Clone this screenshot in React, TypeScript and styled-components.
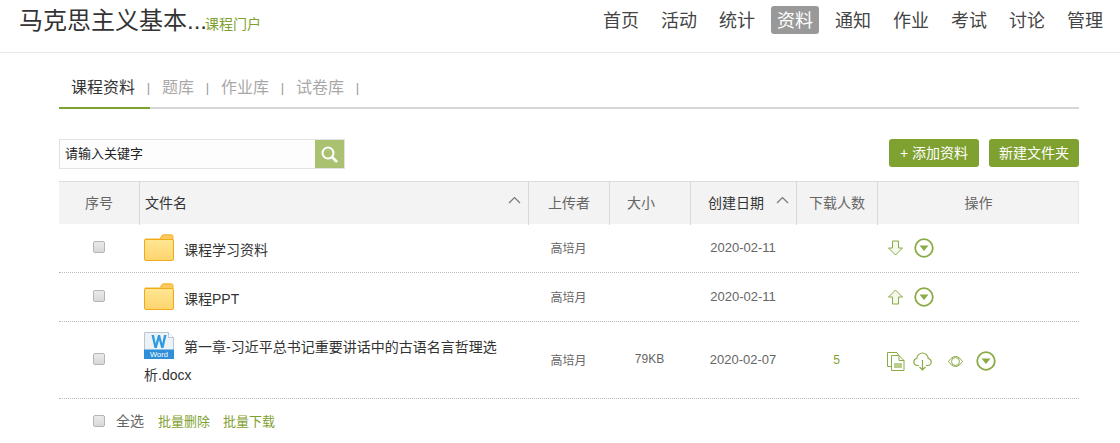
import React from "react";
import styled, { createGlobalStyle } from "styled-components";

const Global = createGlobalStyle`
  html, body { margin: 0; padding: 0; background: #fff; }
  body { font-family: "Liberation Sans", "Noto Sans CJK SC", sans-serif; color: #333; overflow: hidden; }
  * { box-sizing: border-box; }
`;
const green = "#7fa130";
const iconGreen = "#8aab45";

const Header = styled.header`
  height: 53px; border-bottom: 1px solid #e8e8e8; display: flex; justify-content: space-between;
  padding: 0 11px 0 19px;
`;
const Brand = styled.div`display: flex; align-items: center; height: 34px; margin-top: 4px;`;
const Title = styled.span`font-size: 24px; line-height: 34px; color: #333;`;
const Sub = styled.span`font-size: 14px; color: ${green}; margin: 4px 0 0 -2px;`;
const Nav = styled.nav`display: flex; gap: 10px; padding-top: 6px; align-items: flex-start;`;
const NavItem = styled.a<{ $on?: boolean }>`
  width: 48px; height: 28px; border-radius: 3px; text-align: center;
  font-size: 18px; line-height: 30px;
  color: ${p => (p.$on ? "#fff" : "#444")}; background: ${p => (p.$on ? "#999" : "transparent")};
`;
const Main = styled.main`padding: 0 41px 0 59px;`;
const Tabs = styled.div`
  margin-top: 20px; height: 36px; border-bottom: 2px solid #d6d6d6; display: flex; align-items: flex-start;
`;
const Tab = styled.a`
  font-size: 16px; line-height: 30px; height: 36px; padding: 0 13px; color: #a8a8a8;
`;
const ActiveTab = styled.a`
  font-size: 16px; line-height: 30px; height: 36px; width: 89px; padding-left: 12px; color: #333; position: relative;
  &::after { content: ""; position: absolute; left: 0; bottom: 0; width: 91px; height: 2px; background: ${green}; }
`;
const Sep = styled.span`font-size: 13px; line-height: 30px; color: #999; width: 1px; display: flex; justify-content: center;`;
const Tools = styled.div`display: flex; justify-content: space-between; margin-top: 30px; height: 29px;`;
const Search = styled.div`width: 286px; height: 30px; border: 1px solid #e2e2e2; display: flex; background: #fdfdfd;`;
const SearchText = styled.div`flex: 1; font-size: 13px; color: #222; line-height: 28px; padding-left: 5px;`;
const SearchBtn = styled.div`width: 29px; background: #a9c170; display: flex; align-items: center; justify-content: center;`;
const Buttons = styled.div`display: flex; gap: 10px;`;
const Btn = styled.a`
  width: 90px; height: 28px; background: ${green}; color: #fff; font-size: 14px; line-height: 29px; border-radius: 3px; text-align: center;
`;
const Table = styled.div`margin-top: 13px;`;
const cols = "80px 389px 81px 81px 106px 81px 202px";
const HeadRow = styled.div`
  display: grid; grid-template-columns: ${cols}; height: 43px; background: #f3f3f3;
  border-top: 1px solid #dcdcdc; border-right: 1px solid #e6e6e6;
`;
const HeadCell = styled.div<{ $align?: "left" | "center"; $pad?: number; $dark?: boolean }>`
  font-size: 14px; line-height: 43px; color: ${p => (p.$dark ? "#333" : "#666")};
  text-align: ${p => p.$align || "center"};
  padding-left: ${p => p.$pad || 0}px;
  border-left: 1px solid #d8d8d8; position: relative;
  &:first-child { border-left: none; }
`;
const SortMark = styled.svg`position: absolute; right: 7px; top: 14px;`;
const Row = styled.div<{ $h: number }>`
  display: grid; grid-template-columns: ${cols}; height: ${p => p.$h}px; border-bottom: 1px dotted #bbb; align-items: center;
`;
const CheckCell = styled.div`display: flex; justify-content: center; padding-bottom: 2px;`;
const Check = styled.span`
  display: block; width: 12px; height: 12px; border: 1px solid #b5b5b5; border-radius: 2px; background: linear-gradient(#eaeaea, #d8d8d8);
`;
const NameCell = styled.div`font-size: 14px; color: #333; padding: 0 0 2px 5px; display: flex; align-items: center; gap: 10px;`;
const NameText = styled.span`margin-top: 3px;`;
const WrapName = styled.div`font-size: 14px; line-height: 28px; color: #333; padding: 0 20px 0 5px;
  svg { vertical-align: -7px; margin-right: 10px; }
`;
const Cell = styled.div<{ $green?: boolean; $date?: boolean }>`
  font-size: ${p => (p.$date ? 13 : 12)}px; text-align: center; padding-bottom: ${p => (p.$green ? 0 : 2)}px;
  color: ${p => (p.$green ? green : "#666")};
`;
const Ops = styled.div`display: flex; align-items: center; padding-left: 11px; padding-bottom: 1px;`;
const OpsWide = styled.div`display: flex; align-items: center; padding-left: 10px; padding-top: 2px;`;
const IconSlot = styled.span<{ $gap?: number }>`display: flex; margin-right: ${p => p.$gap || 0}px;`;
const Footer = styled.div`display: flex; align-items: center; font-size: 13px; padding-left: 34px; height: 44px;`;
const AllLabel = styled.span`font-size: 14px; color: #666; margin: 0 14px 2px 11px;`;
const Link = styled.a`color: ${green}; margin: 0 13px 2px 0;`;

const Folder = () => (
  <svg width="30" height="27" viewBox="0 0 30 27">
    <defs><linearGradient id="fg" x1="0" y1="0" x2="0" y2="1"><stop offset="0" stopColor="#ffe692" /><stop offset="1" stopColor="#ffd46e" /></linearGradient></defs>
    <path d="M1 5h15l2-3.500c.3-.5.7-.7 1.200-.7h8.300c.8 0 1.500.7 1.500 1.500v4H1z" fill="#fbc95c" stroke="#f2b32e" />
    <rect x="0.500" y="5.500" width="29" height="21" rx="1.500" fill="url(#fg)" stroke="#f2ab18" />
  </svg>
);
const WordLabel = styled.text`font-family: "Liberation Sans", sans-serif; font-size: 7.500px; fill: #fff;`;
const Word = () => (
  <svg width="30" height="27" viewBox="0 0 30 27">
    <path d="M.5.5h24l5 5v21H.5z" fill="#edf2f6" stroke="#b9c7d2" />
    <path d="M24.500.5v5h5" fill="#fff" stroke="#b9c7d2" />
    <rect x="0" y="17.500" width="30" height="9.500" fill="#2f8fd8" />
    <path d="M7.500 3l3 13h2.300l2.200-8 2.200 8h2.300l3-13H20l-1.700 8.500L16 3h-2l-2.300 8.500L10 3z" fill="#2e9be0" />
    <WordLabel x="15" y="25" textAnchor="middle">Word</WordLabel>
  </svg>
);
const Menu = () => (
  <svg width="20" height="20" viewBox="0 0 20 20">
    <circle cx="10" cy="10" r="8.800" fill="none" stroke={iconGreen} strokeWidth="1.800" />
    <path d="M5.500 7.500h9L10 13z" fill={iconGreen} />
  </svg>
);
const ArrowDown = () => (
  <svg width="15" height="16" viewBox="0 0 15 16">
    <path d="M4.500 1h6v7h4l-7 7-7-7h4z" fill="#f6f9ee" stroke={iconGreen} />
  </svg>
);
const ArrowUp = () => (
  <svg width="15" height="16" viewBox="0 0 15 16">
    <path d="M4.500 15h6V8h4l-7-7-7 7h4z" fill="#f6f9ee" stroke={iconGreen} />
  </svg>
);
const Doc = () => (
  <svg width="18" height="19" viewBox="0 0 18 19" fill="none" stroke={iconGreen}>
    <path d="M4.500 14.500H.5V.5h9.500l1.500 2.500" />
    <path d="M4.500 3.500h7.500l5 5v10h-12.500z" fill="#fff" />
    <path d="M12 3.500v5h5" />
    <rect x="7" y="11" width="8" height="5" fill="#b9cd8d" stroke="none" />
  </svg>
);
const Cloud = () => (
  <svg width="19" height="19" viewBox="0 0 19 19" fill="none" stroke={iconGreen} strokeWidth="1.200">
    <path d="M6 13.500H4.500C2.500 13.500 .8 12 .8 10c0-1.800 1.300-3.200 2.900-3.500C4 3.500 6.500 1 9.500 1s5.500 2.500 5.800 5.500c1.700.3 2.900 1.700 2.900 3.500 0 2-1.700 3.500-3.700 3.500H13" />
    <path d="M9.500 8v10M6.500 15l3 3 3-3" />
  </svg>
);
const Eye = () => (
  <svg width="15" height="13" viewBox="0 0 15 13" fill="none" stroke={iconGreen}>
    <path d="M.5 6.500C3 3 5 1.500 7.500 1.500s4.500 1.500 7 5c-2.500 3.500-4.500 5-7 5s-4.500-1.500-7-5z" />
    <circle cx="7.500" cy="6.500" r="4" />
  </svg>
);
const Caret = () => (
  <SortMark width="13" height="8" viewBox="0 0 13 8"><path d="M1 7l5.500-5.500L12 7" fill="none" stroke="#777" strokeWidth="1.200" /></SortMark>
);

export default function App() {
  return (
    <>
      <Global />
      <Header>
        <Brand><Title>马克思主义基本...</Title><Sub>课程门户</Sub></Brand>
        <Nav>
          {["首页", "活动", "统计", "资料", "通知", "作业", "考试", "讨论", "管理"].map(n => (
            <NavItem key={n} $on={n === "资料"}>{n}</NavItem>
          ))}
        </Nav>
      </Header>
      <Main>
        <Tabs>
          <ActiveTab>课程资料</ActiveTab><Sep>|</Sep>
          <Tab>题库</Tab><Sep>|</Sep>
          <Tab>作业库</Tab><Sep>|</Sep>
          <Tab>试卷库</Tab><Sep>|</Sep>
        </Tabs>
        <Tools>
          <Search>
            <SearchText>请输入关键字</SearchText>
            <SearchBtn>
              <svg width="17" height="17" viewBox="0 0 17 17" fill="none" stroke="#fff" strokeWidth="2">
                <circle cx="7" cy="7" r="5.500" /><path d="M11 11l5 5" strokeWidth="2.600" />
              </svg>
            </SearchBtn>
          </Search>
          <Buttons>
            <Btn>+ 添加资料</Btn>
            <Btn>新建文件夹</Btn>
          </Buttons>
        </Tools>
        <Table>
          <HeadRow>
            <HeadCell>序号</HeadCell>
            <HeadCell $align="left" $pad={5} $dark>文件名<Caret /></HeadCell>
            <HeadCell>上传者</HeadCell>
            <HeadCell $align="left" $pad={17}>大小</HeadCell>
            <HeadCell $align="left" $pad={17} $dark>创建日期<Caret /></HeadCell>
            <HeadCell>下载人数</HeadCell>
            <HeadCell>操作</HeadCell>
          </HeadRow>
          <Row $h={49}>
            <CheckCell><Check /></CheckCell>
            <NameCell><Folder /><NameText>课程学习资料</NameText></NameCell>
            <Cell>高培月</Cell><Cell /><Cell $date>2020-02-11</Cell><Cell />
            <Ops><IconSlot $gap={11}><ArrowDown /></IconSlot><Menu /></Ops>
          </Row>
          <Row $h={49}>
            <CheckCell><Check /></CheckCell>
            <NameCell><Folder /><NameText>课程PPT</NameText></NameCell>
            <Cell>高培月</Cell><Cell /><Cell $date>2020-02-11</Cell><Cell />
            <Ops><IconSlot $gap={11}><ArrowUp /></IconSlot><Menu /></Ops>
          </Row>
          <Row $h={77}>
            <CheckCell><Check /></CheckCell>
            <WrapName><Word />第一章-习近平总书记重要讲话中的古语名言哲理选析.docx</WrapName>
            <Cell>高培月</Cell><Cell>79KB</Cell><Cell $date>2020-02-07</Cell><Cell $green>5</Cell>
            <OpsWide>
              <IconSlot $gap={8}><Doc /></IconSlot>
              <IconSlot $gap={16}><Cloud /></IconSlot>
              <IconSlot $gap={13}><Eye /></IconSlot>
              <Menu />
            </OpsWide>
          </Row>
        </Table>
        <Footer>
          <Check />
          <AllLabel>全选</AllLabel>
          <Link>批量删除</Link>
          <Link>批量下载</Link>
        </Footer>
      </Main>
    </>
  );
}
